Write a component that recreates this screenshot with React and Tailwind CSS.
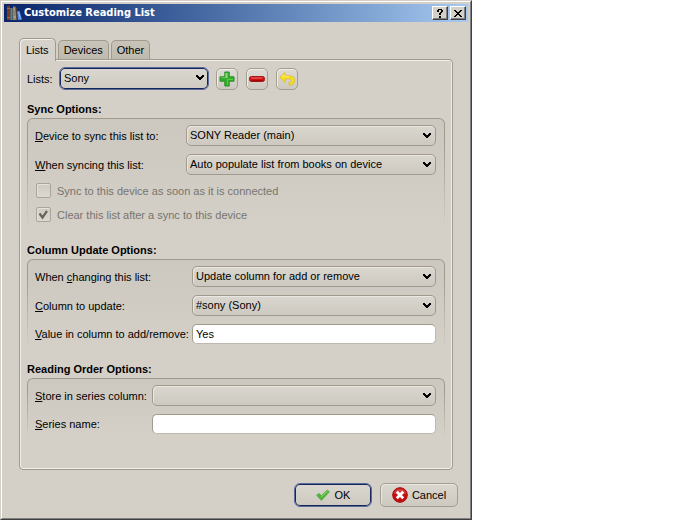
import { useState } from "react";

const TABS = ["Lists", "Devices", "Other"];

function BooksIcon() {
  return (
    <svg width="16" height="16" viewBox="0 0 16 16" aria-hidden="true">
      <path d="M1 1h3v14H1z" fill="#7a3a22" />
      <path d="M1 3.500h3M1 12.500h3" stroke="#b06a34" />
      <path d="M4 3h3v12H4z" fill="#4d5f66" />
      <path d="M5.500 3v12" stroke="#7d8a86" strokeWidth=".8" />
      <path d="M7 1.500h2.500l1.500 13.500H7z" fill="#8f8372" />
      <path d="M7.500 4h2M7.500 12h2.500" stroke="#bfb094" />
      <path d="M9.500 2.500h1.500L12 15h-1.500z" fill="#4a3c36" />
      <path d="M11 6.500l2.500-.7L16 14.500l-4 .5z" fill="#4f86e0" />
      <path d="M12.500 7l2 7.500" stroke="#9cc0ff" strokeWidth=".9" />
    </svg>
  );
}

function PlusIcon() {
  return (
    <svg width="16" height="16" viewBox="0 0 16 16" aria-hidden="true">
      <path
        d="M5.800 1h4.400v4.800H15v4.400h-4.800V15H5.800v-4.800H1V5.800h4.800z"
        fill="#36ac2e"
        stroke="#2b8f26"
        strokeLinejoin="round"
      />
      <path d="M6.500 2h2v5H2V6.400h4.500z" fill="#8fdc80" />
      <path d="M8.500 8.500h5.500M8.500 8.500V14" stroke="#56cf45" />
    </svg>
  );
}

function MinusIcon() {
  return (
    <svg width="16" height="16" viewBox="0 0 16 16" aria-hidden="true">
      <rect x=".5" y="5.500" width="15" height="5" rx="2" fill="#cf1010" stroke="#9c1616" />
      <path d="M2 7h11.500" stroke="#f07070" />
      <path d="M2.500 9.500h11" stroke="#a80000" />
    </svg>
  );
}

function UndoIcon() {
  return (
    <svg width="16" height="16" viewBox="0 0 16 16" aria-hidden="true">
      <path
        d="M.7 6.500L6 1.500v3.300h4.500c3 0 5 1.500 5 4.300 0 3.200-2 5.200-5.500 5.200v-2.800c1.700 0 2.500-.8 2.500-1.900 0-1.200-.8-1.700-2.200-1.700H6v3.400z"
        fill="#f6de22"
        stroke="#d8b81c"
        strokeWidth=".7"
        strokeLinejoin="round"
      />
      <path d="M2.400 6.200l2.800-2.600v2h5" stroke="#fff07a" fill="none" strokeWidth=".8" />
    </svg>
  );
}

function OkIcon() {
  return (
    <svg width="14" height="14" viewBox="0 0 14 14" aria-hidden="true">
      <path
        d="M.6 7.300l2.400-1.900L5.300 7.600 11.300 2l2.200 1.800-8.100 8.700z"
        fill="#4fb836"
        stroke="#5aa050"
        strokeWidth=".7"
        strokeLinejoin="round"
      />
      <path d="M5.300 8.700L11.500 3" stroke="#8fd67c" />
    </svg>
  );
}

function CancelIcon() {
  return (
    <svg width="16" height="16" viewBox="0 0 16 16" aria-hidden="true">
      <circle cx="8" cy="8" r="7.300" fill="#c60d10" stroke="#a50a0c" />
      <path d="M2 6.500a6.200 6.200 0 0112 0c-3 1.500-8 1.500-12 0z" fill="#d63c3c" />
      <path d="M4.800 4.800l6.400 6.400M11.200 4.800l-6.400 6.400" stroke="#fff" strokeWidth="2.800" />
    </svg>
  );
}

function HelpIcon() {
  return (
    <svg width="8" height="9" viewBox="0 0 8 9" shapeRendering="crispEdges" aria-hidden="true">
      <path d="M2 0h4v1H2zM1 1h2v2H1zM5 1h2v2H5zM4 3h2v1H4zM3 4h2v2H3zM3 7h2v2H3z" />
    </svg>
  );
}

function CloseIcon() {
  return (
    <svg width="8" height="7" viewBox="0 0 8 7" shapeRendering="crispEdges" aria-hidden="true">
      <path d="M0 0h2v1H0zM6 0h2v1H6zM1 1h2v1H1zM5 1h2v1H5zM2 2h4v1H2zM3 3h2v1H3zM2 4h4v1H2zM1 5h2v1H1zM5 5h2v1H5zM0 6h2v1H0zM6 6h2v1H6z" />
    </svg>
  );
}

function TitleButton({ label, children }) {
  return (
    <button
      type="button"
      aria-label={label}
      className="flex h-[14px] w-4 items-center justify-center border border-t-white border-r-[#404040] border-b-[#404040] border-l-white bg-[#d4d0c8] shadow-[inset_-1px_-1px_0_#808080]"
    >
      {children}
    </button>
  );
}

function ToolButton({ label, children }) {
  return (
    <button
      type="button"
      aria-label={label}
      className="flex size-[22px] items-center justify-center rounded-[5px] border border-[#a39e92] bg-linear-to-b from-[#dedbd5] to-[#cdc9c0] shadow-[inset_1px_1px_0_#efede9]"
    >
      {children}
    </button>
  );
}

function Select({ id, options, focused }) {
  return (
    <div className="relative flex min-w-0 flex-1">
      <select
        id={id}
        className={
          focused
            ? "h-[23px] w-full appearance-none rounded-[6px] border border-[#5c6c98] bg-linear-to-b from-[#dad7d0] to-[#cfcbc2] pr-5 pb-px pl-1 shadow-[inset_0_0_0_1px_#14265c] outline-none"
            : "h-[21px] w-full appearance-none rounded-[5px] border border-[#9f9a8c] bg-linear-to-b from-[#dad7d0] to-[#cdc9c0] pr-5 pb-px pl-[3px] shadow-[inset_1px_1px_0_#eae7e2] outline-none"
        }
      >
        {options.map((option) => (
          <option key={option}>{option}</option>
        ))}
      </select>
      <svg
        width="8"
        height="6"
        viewBox="0 0 8 6"
        shapeRendering="crispEdges"
        className="pointer-events-none absolute top-2 right-[5px]"
        aria-hidden="true"
      >
        <path d="M0 0h2v1h1v1h2V1h1V0h2v2H7v1H6v1H5v1H3V4H2V3H1V2H0z" />
      </svg>
    </div>
  );
}

function TextInput({ id, defaultValue }) {
  return (
    <input
      id={id}
      type="text"
      defaultValue={defaultValue}
      className="h-5 min-w-0 flex-1 rounded-[5px] border border-t-[#9f9a8c] border-r-[#bdb9af] border-b-[#bdb9af] border-l-[#9f9a8c] bg-white px-[3px] pb-px outline-none"
    />
  );
}

// The hot key letter of a label is underlined
function Label({ htmlFor, before = "", hotkey, children, className }) {
  return (
    <label htmlFor={htmlFor} className={className}>
      {before}
      <span className="underline underline-offset-1">{hotkey}</span>
      {children}
    </label>
  );
}

function Group({ title, children }) {
  return (
    <section>
      <h2 className="mb-[2px] leading-[14px] font-bold">{title}</h2>
      <div className="rounded-t-[6px] bg-linear-to-b from-[#9f9a8c] from-20% to-[#d4d0c8] px-px pt-px">
        <div className="flex flex-col gap-2 rounded-t-[5px] bg-linear-to-b from-[#ccc8bf] to-[#d4d0c8] pt-[6px] pr-2 pb-1 pl-[7px]">
          {children}
        </div>
      </div>
    </section>
  );
}

function CheckRow({ label, checked }) {
  return (
    <label className="flex items-center gap-[6px] text-[#77746d]">
      <span className="relative flex">
        <input
          type="checkbox"
          disabled
          defaultChecked={checked}
          className="size-[15px] appearance-none rounded-[2px] border border-[#aaa598] bg-linear-to-b from-[#cfcbc3] to-[#dbd8d1] shadow-[inset_1px_1px_0_#e4e1dc]"
        />
        {checked && (
          <svg
            width="15"
            height="15"
            viewBox="0 0 15 15"
            className="pointer-events-none absolute inset-0"
            aria-hidden="true"
          >
            <path d="M3.500 6.500l3 4L11 4" fill="none" stroke="#66635c" strokeWidth="2.200" />
          </svg>
        )}
      </span>
      {label}
    </label>
  );
}

export default function App() {
  const [tab, setTab] = useState("Lists");

  return (
    <main className="min-h-screen bg-white font-['Liberation_Sans',Arial,sans-serif] text-[11px] leading-[14px] text-black">
      <div className="w-full max-w-[472px] border border-t-[#d4d0c8] border-r-[#404040] border-b-[#404040] border-l-[#d4d0c8]">
        <div className="border border-t-white border-r-[#808080] border-b-[#808080] border-l-white bg-[#d4d0c8] p-[2px]">
          <header className="flex h-[18px] items-center bg-linear-to-r from-[#0a246a] to-[#a6caf0] px-[2px]">
            <BooksIcon />
            <h1 className="ml-[2px] flex-1 font-['DejaVu_Sans_Condensed','DejaVu_Sans',sans-serif] font-bold text-white">
              Customize Reading List
            </h1>
            <div className="flex gap-[2px]">
              <TitleButton label="Help">
                <HelpIcon />
              </TitleButton>
              <TitleButton label="Close">
                <CloseIcon />
              </TitleButton>
            </div>
          </header>

          <div className="px-[15px] pt-4 pb-[9px]">
            <div role="tablist" className="flex items-end gap-[2px]">
              {TABS.map((name) => (
                <button
                  key={name}
                  type="button"
                  role="tab"
                  aria-selected={tab === name}
                  onClick={() => setTab(name)}
                  className={
                    tab === name
                      ? "relative z-10 -mb-[2px] h-[23px] rounded-t-[5px] border border-b-0 border-[#9f9a8c] bg-[#d6d2cb] px-[6px] pb-px shadow-[inset_1px_1px_0_#f2f0ec]"
                      : "h-[19px] rounded-t-[5px] border border-b-0 border-[#9f9a8c] bg-linear-to-b from-[#c9c4b9] to-[#bfbaae] px-[5px]"
                  }
                >
                  {name}
                </button>
              ))}
            </div>

            <div
              role="tabpanel"
              className="rounded-[4px] rounded-tl-none border border-[#9f9a8c] px-[7px] pt-[7px] pb-[31px] shadow-[inset_0_0_0_1px_#f0eee9]"
            >
              <div className="flex items-center">
                <label htmlFor="list" className="w-8">
                  Lists:
                </label>
                <div className="flex w-[150px]">
                  <Select id="list" options={["Sony"]} focused />
                </div>
                <div className="ml-[7px] flex gap-2">
                  <ToolButton label="Add list">
                    <PlusIcon />
                  </ToolButton>
                  <ToolButton label="Delete list">
                    <MinusIcon />
                  </ToolButton>
                  <ToolButton label="Restore list">
                    <UndoIcon />
                  </ToolButton>
                </div>
              </div>

              <div className="mt-3 flex flex-col gap-[14px]">
                <Group title="Sync Options:">
                  <div className="flex items-center">
                    <Label htmlFor="device" hotkey="D" className="w-[151px]">
                      evice to sync this list to:
                    </Label>
                    <Select id="device" options={["SONY Reader (main)"]} />
                  </div>
                  <div className="flex items-center">
                    <Label htmlFor="sync" hotkey="W" className="w-[151px]">
                      hen syncing this list:
                    </Label>
                    <Select id="sync" options={["Auto populate list from books on device"]} />
                  </div>
                  <div className="flex flex-col gap-[9px] pb-[3px] pl-px">
                    <CheckRow label="Sync to this device as soon as it is connected" />
                    <CheckRow label="Clear this list after a sync to this device" checked />
                  </div>
                </Group>

                <Group title="Column Update Options:">
                  <div className="flex items-center">
                    <Label htmlFor="change" before="When " hotkey="c" className="w-[157px]">
                      hanging this list:
                    </Label>
                    <Select id="change" options={["Update column for add or remove"]} />
                  </div>
                  <div className="flex items-center">
                    <Label htmlFor="column" hotkey="C" className="w-[157px]">
                      olumn to update:
                    </Label>
                    <Select id="column" options={["#sony (Sony)"]} />
                  </div>
                  <div className="flex items-center">
                    <Label htmlFor="value" hotkey="V" className="w-[157px]">
                      alue in column to add/remove:
                    </Label>
                    <TextInput id="value" defaultValue="Yes" />
                  </div>
                </Group>

                <Group title="Reading Order Options:">
                  <div className="flex items-center">
                    <Label htmlFor="store" hotkey="S" className="w-[117px]">
                      tore in series column:
                    </Label>
                    <Select id="store" options={[""]} />
                  </div>
                  <div className="flex items-center">
                    <Label htmlFor="series" hotkey="S" className="w-[117px]">
                      eries name:
                    </Label>
                    <TextInput id="series" defaultValue="" />
                  </div>
                </Group>
              </div>
            </div>

            <footer className="mt-[13px] -mr-[5px] flex justify-end gap-2">
              <button
                type="button"
                className="flex h-6 w-[78px] items-center justify-center gap-[5px] rounded-[6px] border border-[#5c6c98] bg-linear-to-b from-[#dad7d0] to-[#cdc9c0] shadow-[inset_0_0_0_1px_#14265c]"
              >
                <OkIcon />
                OK
              </button>
              <button
                type="button"
                className="flex h-6 w-[78px] items-center justify-center gap-1 rounded-[5px] border border-[#a39e92] bg-linear-to-b from-[#dad7d0] to-[#cdc9c0] shadow-[inset_1px_1px_0_#eae7e2]"
              >
                <CancelIcon />
                Cancel
              </button>
            </footer>
          </div>
        </div>
      </div>
    </main>
  );
}
